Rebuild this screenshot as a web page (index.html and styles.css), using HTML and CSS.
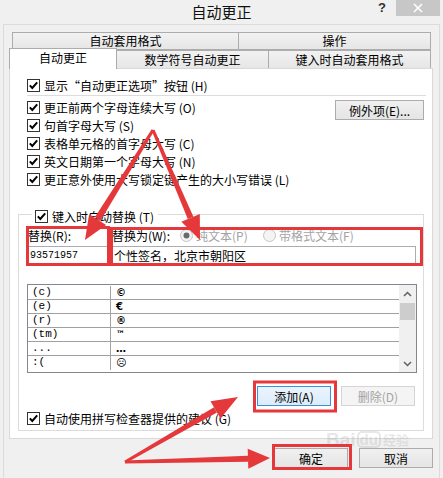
FILE: index.html
```html
<!DOCTYPE html>
<html lang="zh-CN">
<head>
<meta charset="utf-8">
<title>自动更正</title>
<link rel="stylesheet" href="styles.css">
</head>
<body>
<div class="titlebar">
  <div></div>
  <div class="title">自动更正</div>
  <div class="tb-right"><span class="help">?</span><span class="close"><svg width="10" height="10" viewBox="0 0 10 10"><path d="M1 1L9 9M9 1L1 9" stroke="#fff" stroke-width="1.6"/></svg></span></div>
</div>
<div class="frame">
  <div class="tabs-back">
    <div class="tab tab-a">自动套用格式</div>
    <div class="tab tab-b">操作</div>
  </div>
  <div class="tabs-front">
    <div class="tab tab-sel">自动更正</div>
    <div class="tab tab-c">数学符号自动更正</div>
    <div class="tab tab-d">键入时自动套用格式</div>
  </div>
  <div class="panel">
    <div class="cbrow first"><svg class="cb" viewBox="0 0 13 13"><rect x="0.5" y="0.5" width="12" height="12" fill="#fff" stroke="#333"/><path d="M2.8 6.4L5.3 9L10.2 3.4" fill="none" stroke="#000" stroke-width="2"/></svg><span>显示“自动更正选项”按钮 (H)</span></div>
    <div class="sep"></div>
    <div class="opts">
      <div class="opt-list">
        <div class="cbrow"><svg class="cb" viewBox="0 0 13 13"><rect x="0.5" y="0.5" width="12" height="12" fill="#fff" stroke="#333"/><path d="M2.8 6.4L5.3 9L10.2 3.4" fill="none" stroke="#000" stroke-width="2"/></svg><span>更正前两个字母连续大写 (O)</span></div>
        <div class="cbrow"><svg class="cb" viewBox="0 0 13 13"><rect x="0.5" y="0.5" width="12" height="12" fill="#fff" stroke="#333"/><path d="M2.8 6.4L5.3 9L10.2 3.4" fill="none" stroke="#000" stroke-width="2"/></svg><span>句首字母大写 (S)</span></div>
        <div class="cbrow"><svg class="cb" viewBox="0 0 13 13"><rect x="0.5" y="0.5" width="12" height="12" fill="#fff" stroke="#333"/><path d="M2.8 6.4L5.3 9L10.2 3.4" fill="none" stroke="#000" stroke-width="2"/></svg><span>表格单元格的首字母大写 (C)</span></div>
        <div class="cbrow"><svg class="cb" viewBox="0 0 13 13"><rect x="0.5" y="0.5" width="12" height="12" fill="#fff" stroke="#333"/><path d="M2.8 6.4L5.3 9L10.2 3.4" fill="none" stroke="#000" stroke-width="2"/></svg><span>英文日期第一个字母大写 (N)</span></div>
        <div class="cbrow"><svg class="cb" viewBox="0 0 13 13"><rect x="0.5" y="0.5" width="12" height="12" fill="#fff" stroke="#333"/><path d="M2.8 6.4L5.3 9L10.2 3.4" fill="none" stroke="#000" stroke-width="2"/></svg><span>更正意外使用大写锁定键产生的大小写错误 (L)</span></div>
      </div>
      <div class="btn btn-exc">例外项(E)...</div>
    </div>
    <div class="group">
      <div class="legend"><svg class="cb" viewBox="0 0 13 13"><rect x="0.5" y="0.5" width="12" height="12" fill="#fff" stroke="#333"/><path d="M2.8 6.4L5.3 9L10.2 3.4" fill="none" stroke="#000" stroke-width="2"/></svg><span>键入时自动替换 (T)</span></div>
      <div class="rep-labels">
        <div class="lab-r">替换(R):</div>
        <div class="lab-w">替换为(W):</div>
        <div class="radio r1"><svg class="rd" viewBox="0 0 13 13"><circle cx="6.5" cy="6.5" r="6" fill="#f4f4f4" stroke="#c4c4c4"/><circle cx="6.5" cy="6.5" r="3" fill="#6a6a6a"/></svg><span>纯文本(P)</span></div>
        <div class="radio"><svg class="rd" viewBox="0 0 13 13"><circle cx="6.5" cy="6.5" r="6" fill="#f4f4f4" stroke="#c4c4c4"/></svg><span>带格式文本(F)</span></div>
      </div>
      <div class="rep-inputs">
        <div class="inp inp-r">93571957</div>
        <div class="inp inp-w">个性签名，北京市朝阳区</div>
      </div>
      <div class="list">
        <div class="list-body">
          <div class="lrow"><div class="c1">(c)</div><div class="c2">©</div></div>
          <div class="lrow"><div class="c1">(e)</div><div class="c2">€</div></div>
          <div class="lrow"><div class="c1">(r)</div><div class="c2">®</div></div>
          <div class="lrow"><div class="c1">(tm)</div><div class="c2 tm">™</div></div>
          <div class="lrow"><div class="c1">...</div><div class="c2">…</div></div>
          <div class="lrow"><div class="c1">:(</div><div class="c2">☹</div></div>
        </div>
        <div class="scroll">
          <div class="sarrow"><svg width="9" height="6" viewBox="0 0 9 6"><path d="M1 5L4.5 1.5L8 5" fill="none" stroke="#606060" stroke-width="1.5"/></svg></div>
          <div class="thumb"></div>
          <div class="sfill"></div>
          <div class="sarrow"><svg width="9" height="6" viewBox="0 0 9 6"><path d="M1 1L4.5 4.5L8 1" fill="none" stroke="#606060" stroke-width="1.5"/></svg></div>
        </div>
      </div>
      <div class="grp-btns">
        <div class="btn btn-add">添加(A)</div>
        <div class="btn btn-del">删除(D)</div>
      </div>
      <div class="cbrow spell"><svg class="cb" viewBox="0 0 13 13"><rect x="0.5" y="0.5" width="12" height="12" fill="#fff" stroke="#333"/><path d="M2.8 6.4L5.3 9L10.2 3.4" fill="none" stroke="#000" stroke-width="2"/></svg><span>自动使用拼写检查器提供的建议 (G)</span></div>
    </div>
  </div>
  <div class="dlg-btns">
    <div class="btn">确定</div>
    <div class="btn">取消</div>
  </div>
</div>
<div class="watermark"><span class="wm-b">Bai</span><span class="wm-du">du</span><span class="wm-j">经验</span></div>
<svg class="annot" width="443" height="478" viewBox="0 0 443 478">
  <g fill="none" stroke="#e5383b" stroke-width="3">
    <rect x="27.5" y="227.5" width="81" height="37"/>
    <rect x="111.5" y="228.5" width="310" height="36"/>
    <rect x="254.5" y="382" width="81" height="29"/>
    <rect x="273.5" y="445.5" width="77" height="23"/>
  </g>
  <g fill="#e5383b">
    <polygon points="154.3,130.8 151.7,129.2 95.0,217.0 100.2,221.2"/>
    <polygon points="85,240 106.1,224.9 89.1,214.3"/>
    <polygon points="154.4,129.4 151.6,130.6 187.8,219.1 193.4,216.7"/>
    <polygon points="200,240 199.8,214.0 181.4,221.8"/>
    <polygon points="125.7,463.3 124.3,460.7 214.0,407.3 217.0,412.5"/>
    <polygon points="238,397 220.5,418.6 210.5,401.2"/>
    <polygon points="125,463.5 125,460.5 248,455.7 248,461.7"/>
    <polygon points="270,458 248.3,468.7 247.7,448.7"/>
  </g>
</svg>
</body>
</html>
```
FILE: styles.css
```css
body {
  margin: 0;
  width: 443px;
  height: 478px;
  overflow: hidden;
  background: #f0f0f0;
  font-family: "Noto Sans CJK SC", "Microsoft YaHei", sans-serif;
  font-size: 12px;
  color: #000;
  position: relative;
}

.titlebar {
  height: 24px;
  display: grid;
  grid-template-columns: 1fr auto 1fr;
}
.title {
  font-size: 15px;
  line-height: 24px;
  color: #111;
}
.tb-right {
  display: flex;
  justify-content: flex-end;
  align-items: flex-start;
}
.help {
  font: bold 13px "Liberation Sans", sans-serif;
  line-height: 16px;
  color: #333;
  margin-right: 10px;
}
.close {
  width: 44px;
  height: 16px;
  background: #c7c7c7;
  display: flex;
  align-items: center;
  justify-content: center;
  margin-right: 3px;
}

.frame {
  margin: 0 3px;
  height: 454px;
  box-sizing: border-box;
  border: 1px solid #dcdcdc;
  border-bottom: none;
  padding: 7px 6px 0 5px;
}

.tabs-back {
  display: flex;
  margin-left: 3px;
  height: 18px;
}
.tab {
  box-sizing: border-box;
  border: 1px solid #acacac;
  background: linear-gradient(#f2f2f2, #e6e6e6);
  text-align: center;
  line-height: 16px;
  white-space: nowrap;
}
.tab-a { width: 227px; }
.tab-b { width: 192px; border-left: none; }

.tabs-front {
  display: flex;
  align-items: flex-end;
  height: 21px;
  margin-top: -2px;
  margin-bottom: -1px;
  position: relative;
  z-index: 1;
}
.tab-sel {
  width: 108px;
  height: 21px;
  background: #fff;
  border-bottom: none;
  line-height: 18px;
}
.tab-c, .tab-d {
  height: 18px;
  border-left: none;
  border-bottom: none;
  margin-bottom: 1px;
  line-height: 17px;
}
.tab-c { width: 152px; }
.tab-d { width: 162px; }

.panel {
  box-sizing: border-box;
  height: 371px;
  border: 1px solid #d9d9d9;
  background: #fff;
  padding: 7px 8px 0 17px;
}

.cbrow {
  display: flex;
  align-items: center;
  gap: 4px;
  height: 18px;
  white-space: nowrap;
}
.cb {
  width: 13px;
  height: 13px;
  flex: none;
}
.sep {
  height: 1px;
  background: #dcdcdc;
  margin: 1px -2px 0 0;
}
.opts {
  display: flex;
  justify-content: space-between;
  margin-top: 2px;
}

.btn {
  box-sizing: border-box;
  width: 74px;
  height: 20px;
  border: 1px solid #acacac;
  background: linear-gradient(#f0f0f0, #e5e5e5);
  display: flex;
  align-items: center;
  justify-content: center;
  white-space: nowrap;
}
.btn-exc {
  width: 89px;
  margin-top: 2px;
}
.btn-add {
  border-color: #3c8fdc;
  background: linear-gradient(#ecf4fc, #dcecfc);
}
.btn-del {
  border-color: #d5d5d5;
  background: #f4f4f4;
  color: #a3a3a3;
}

.group {
  border: 1px solid #dcdcdc;
  margin: 26px 0 0 -9px;
  padding: 0 6px 3px 8px;
}
.legend {
  display: flex;
  align-items: center;
  gap: 4px;
  height: 18px;
  width: fit-content;
  background: #fff;
  margin: -8px 0 0 5px;
  padding: 0 4px 0 3px;
}

.rep-labels {
  display: flex;
  align-items: center;
  height: 18px;
  margin-top: 1px;
  white-space: nowrap;
}
.lab-r {
  width: 85px;
  box-sizing: border-box;
  padding-left: 1px;
}
.lab-w { width: 68px; }
.radio {
  display: flex;
  align-items: center;
  gap: 3px;
  color: #a3a3a3;
}
.r1 { width: 83px; }
.rd {
  width: 13px;
  height: 13px;
  flex: none;
}

.rep-inputs {
  display: flex;
  margin-top: 2px;
  height: 19px;
}
.inp {
  box-sizing: border-box;
  height: 19px;
  border: 1px solid #abadb3;
  background: #fff;
  display: flex;
  align-items: center;
  padding-left: 1px;
  white-space: nowrap;
}
.inp-r {
  width: 80px;
  margin-left: 1px;
  font-family: "Liberation Mono", monospace;
  font-size: 10px;
}
.inp-w {
  width: 304px;
  margin-left: 4px;
}

.list {
  display: flex;
  margin-top: 19px;
  height: 89px;
  box-sizing: border-box;
  border: 1px solid #828790;
  background: #fff;
}
.list-body {
  flex: 1;
  padding-top: 1px;
}
.lrow {
  display: flex;
  height: 14px;
  box-sizing: border-box;
  border-bottom: 1px solid #a0a0a0;
  line-height: 13px;
}
.lrow:last-child { border-bottom: none; }
.c1 {
  width: 83px;
  box-sizing: border-box;
  border-right: 1px solid #a0a0a0;
  padding-left: 4px;
  font-family: "Liberation Mono", monospace;
  font-size: 11px;
}
.c2 {
  padding-left: 5px;
  font-family: "DejaVu Sans", sans-serif;
  font-size: 10px;
  font-weight: bold;
}
.c2.tm { font-size: 9px; }
.scroll {
  width: 17px;
  background: #f0f0f0;
  display: flex;
  flex-direction: column;
}
.sarrow {
  height: 17px;
  display: flex;
  align-items: center;
  justify-content: center;
}
.thumb {
  height: 17px;
  margin: 1px 1px 0;
  background: #cdcdcd;
}
.sfill { flex: 1; }

.grp-btns {
  display: flex;
  justify-content: flex-end;
  gap: 10px;
  margin-top: 13px;
  padding-right: 2px;
}
.spell { margin-top: 3px; }

.dlg-btns {
  display: flex;
  justify-content: flex-end;
  gap: 11px;
  margin-top: 9px;
}

.watermark {
  position: absolute;
  left: 326px;
  top: 431px;
  height: 17px;
  display: flex;
  align-items: center;
  line-height: 16px;
  font-family: "Liberation Sans", sans-serif;
  font-weight: bold;
  color: rgba(170, 170, 170, 0.28);
  pointer-events: none;
}
.wm-b { font-size: 19px; }
.wm-du {
  font-size: 15px;
  line-height: 13px;
  border: 2px solid rgba(170, 170, 170, 0.28);
  border-radius: 5px;
  padding: 0 1px;
  margin-left: 1px;
}
.wm-j {
  font-family: "Noto Sans CJK SC", sans-serif;
  font-size: 13px;
  margin-left: 2px;
}

.annot {
  position: absolute;
  left: 0;
  top: 0;
  pointer-events: none;
}
```
